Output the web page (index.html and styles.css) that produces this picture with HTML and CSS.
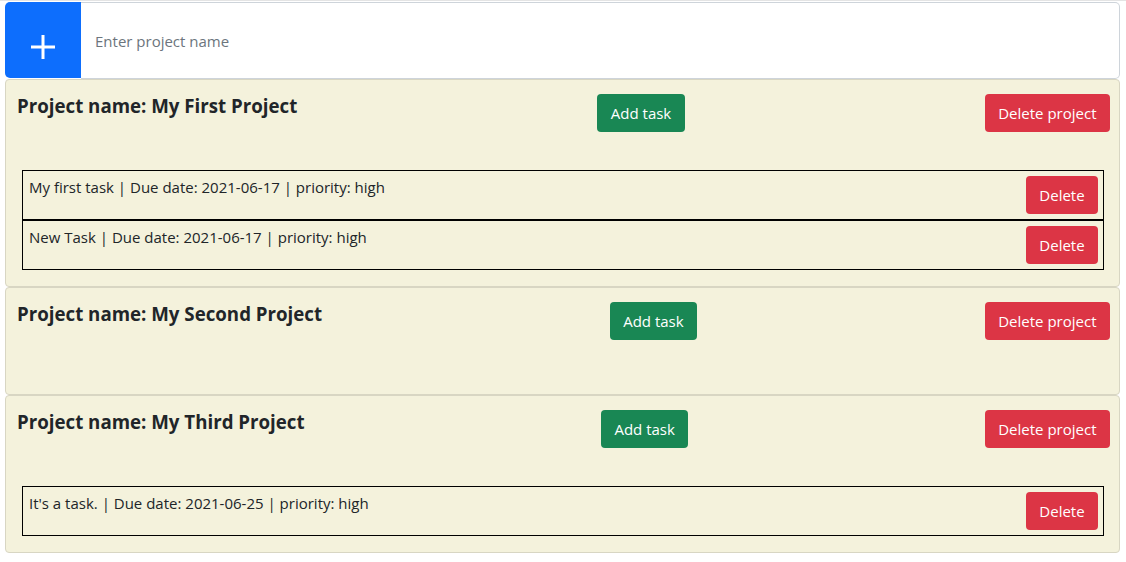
FILE: index.html
```html
<!DOCTYPE html>
<html>
<head>
<meta charset="utf-8">
<link rel="stylesheet" href="styles.css">
</head>
<body>
<div class="page">
  <form class="input-group">
    <button type="button" class="add-btn" aria-label="Add project">
      <svg width="24" height="24" viewBox="0 0 24 24"><path d="M12 0V24M0 12H24" stroke="#fff" stroke-width="3" fill="none"/></svg>
    </button>
    <input class="project-input" type="text" placeholder="Enter project name">
  </form>

  <div class="card">
    <div class="card-head">
      <h5 class="title">Project name: My First Project</h5>
      <button class="btn btn-green">Add task</button>
      <button class="btn btn-red">Delete project</button>
    </div>
    <div class="tasks">
      <div class="task"><span>My first task | Due date: 2021-06-17 | priority: high</span><button class="btn btn-red">Delete</button></div>
      <div class="task"><span>New Task | Due date: 2021-06-17 | priority: high</span><button class="btn btn-red">Delete</button></div>
    </div>
  </div>

  <div class="card">
    <div class="card-head">
      <h5 class="title">Project name: My Second Project</h5>
      <button class="btn btn-green">Add task</button>
      <button class="btn btn-red">Delete project</button>
    </div>
  </div>

  <div class="card">
    <div class="card-head">
      <h5 class="title">Project name: My Third Project</h5>
      <button class="btn btn-green">Add task</button>
      <button class="btn btn-red">Delete project</button>
    </div>
    <div class="tasks">
      <div class="task"><span>It's a task. | Due date: 2021-06-25 | priority: high</span><button class="btn btn-red">Delete</button></div>
    </div>
  </div>
</div>
</body>
</html>
```

FILE: styles.css
```css
* { box-sizing: border-box; }
html, body { margin: 0; padding: 0; background: #fff; }
body {
  font-family: "Open Sans", "Noto Sans", sans-serif;
  font-size: 15px;
  color: #212529;
}
.page {
  padding: 1px 6px 0 5px;
  border-top: 1px solid #e4e4e4;
}
.input-group {
  display: flex;
  height: 77px;
  margin: 0;
}
.add-btn {
  width: 76px;
  height: 76px;
  border: none;
  border-radius: 5px 0 0 5px;
  background: #0d6efd;
  display: flex;
  align-items: center;
  justify-content: center;
  padding: 13px 0 0 0;
  cursor: pointer;
}
.project-input {
  flex: 1;
  height: 77px;
  border: 1px solid #ced4da;
  border-left: none;
  border-radius: 0 5px 5px 0;
  padding: 0 14px;
  font-family: inherit;
  font-size: 15px;
  color: #212529;
  outline: none;
}
.project-input::placeholder { color: #6c757d; }
.card {
  background: #f4f2dc;
  border: 1px solid #d8d6c3;
  border-radius: 4px;
  padding: 14px 9px 16px 11px;
}
.card-head {
  display: flex;
  justify-content: space-between;
  align-items: flex-start;
  margin-bottom: 38px;
}
.title {
  margin: 0;
  font-size: 18.7px;
  font-weight: 700;
  line-height: 23px;
}
.btn {
  height: 38px;
  border: none;
  border-radius: 4px;
  padding: 0 13.5px;
  font-family: inherit;
  font-size: 15px;
  color: #fff;
  cursor: pointer;
}
.btn-green { background: #198754; }
.btn-red { background: #dc3545; }
.tasks {
  margin: 0 6px 0 5px;
}
.task {
  display: flex;
  justify-content: space-between;
  align-items: flex-start;
  border: 1px solid #000;
  padding: 5px 5px 5px 6px;
  height: 50px;
}
.task span { line-height: 23px; }
.task .btn { width: 72px; padding: 0; }
```
